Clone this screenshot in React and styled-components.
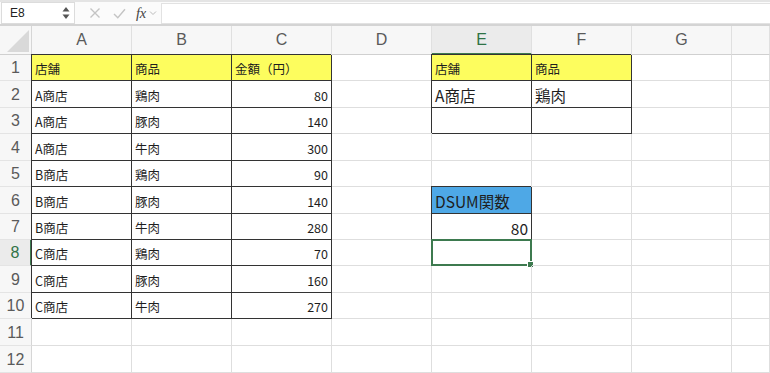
import React from "react";
import styled, { createGlobalStyle, css } from "styled-components";

const Global = createGlobalStyle`
  html, body { margin: 0; padding: 0; background: #fff; }
  body { font-family: "Noto Sans CJK JP", "Liberation Sans", sans-serif; overflow: hidden; }
`;

const Page = styled.div`
  width: 770px;
  height: 373px;
  display: flex;
  flex-direction: column;
  overflow: hidden;
`;

const FormulaBar = styled.div`
  height: 25px;
  box-sizing: border-box;
  border-top: 2px solid #e4e4e4;
  border-bottom: 1px solid #d4d4d4;
  display: flex;
  align-items: center;
  background: #fbfbfb;
  padding: 0 0 0 1px;
`;

const Gap = styled.div`
  height: 3px;
  box-sizing: border-box;
  border-bottom: 1px solid #d4d4d4;
  background: #f3f3f3;
`;

const NameBox = styled.div`
  width: 74px;
  height: 22px;
  box-sizing: border-box;
  border: 1px solid #dcdcdc;
  background: #fff;
  display: flex;
  align-items: center;
  justify-content: space-between;
  padding: 0 4px 0 8px;
  font-family: "Liberation Sans", sans-serif;
  font-size: 12px;
  color: #222;
`;

const Stepper = styled.svg`
  display: block;
`;

const IconBtn = styled.div`
  width: 24px;
  display: flex;
  justify-content: center;
  align-items: center;
  margin-left: ${(p) => p.$ml || 0}px;
`;

const Fx = styled.span`
  font-family: "Liberation Serif", serif;
  font-style: italic;
  font-size: 14.5px;
  color: #444;
  margin-left: 5px;
  letter-spacing: -0.3px;
`;

const Chevron = styled.svg`
  margin-left: 3px;
`;

const FormulaInput = styled.div`
  flex: 1;
  height: 19px;
  margin-left: 4px;
  border: 1px solid #e2e2e2;
  border-right: none;
  background: #fff;
`;

const Grid = styled.div`
  display: grid;
  grid-template-columns: 32px repeat(7, 100px) 1fr;
  grid-template-rows: 29px 26px 27px 26px 27px 26px 27px 26px 26px 27px 26px 27px 27px;
`;

const Corner = styled.div`
  box-sizing: border-box;
  background: #f7f7f7;
  border-right: 1px solid #d6d6d6;
  border-bottom: 1px solid #d0d0d0;
  display: flex;
  align-items: flex-end;
  justify-content: flex-end;
  padding: 0 2px 2px 0;
`;

const ColHead = styled.div`
  box-sizing: border-box;
  background: ${(p) => (p.$active ? "#ebebeb" : "#f7f7f7")};
  border-right: 1px solid #e0e0e0;
  border-bottom: ${(p) => (p.$active ? "2px solid #3d7a4f" : "1px solid #d0d0d0")};
  display: flex;
  align-items: center;
  justify-content: center;
  font-family: "Liberation Sans", sans-serif;
  font-size: 16px;
  color: ${(p) => (p.$active ? "#2f7346" : "#5a5a5a")};
  padding-top: ${(p) => (p.$active ? "1px" : "0")};
`;

const RowHead = styled.div`
  box-sizing: border-box;
  background: ${(p) => (p.$active ? "#ebebeb" : "#f7f7f7")};
  border-right: ${(p) => (p.$active ? "2px solid #3d7a4f" : "1px solid #d6d6d6")};
  border-bottom: 1px solid #e4e4e4;
  display: flex;
  align-items: center;
  justify-content: center;
  font-family: "Liberation Sans", sans-serif;
  font-size: 16px;
  color: ${(p) => (p.$active ? "#2f7346" : "#5a5a5a")};
  padding-top: 1px;
`;

const Cell = styled.div`
  position: relative;
  box-sizing: border-box;
  border-right: 1px solid #dedede;
  border-bottom: 1px solid #dedede;
  display: flex;
  align-items: center;
  justify-content: ${(p) => (p.$right ? "flex-end" : "flex-start")};
  padding: 2px 3px 0 3px;
  font-size: ${(p) => (p.$big ? "15.5px" : "12.5px")};
  color: #1e1e1e;
  white-space: nowrap;
  background: ${(p) => p.$fill || "transparent"};
  ${(p) =>
    p.$boxed &&
    css`
      border-right-color: #333;
      border-bottom-color: #333;
      box-shadow: -1px -1px 0 0 #333;
    `}
`;

const Selection = styled.div`
  position: absolute;
  left: -1px;
  top: -1px;
  right: -1px;
  bottom: -1px;
  border: 2px solid #3d7a4f;
  pointer-events: none;
`;

const Handle = styled.div`
  position: absolute;
  right: -4px;
  bottom: -4px;
  width: 5px;
  height: 5px;
  background: #3d7a4f;
  border: 1px solid #fff;
`;

const YELLOW = "#fdfd5e";
const BLUE = "#4ea8e6";

const cols = ["A", "B", "C", "D", "E", "F", "G", ""];

const cellData = {
  A1: { t: "店舗", fill: YELLOW, boxed: true },
  B1: { t: "商品", fill: YELLOW, boxed: true },
  C1: { t: "金額（円）", fill: YELLOW, boxed: true },
  E1: { t: "店舗", fill: YELLOW, boxed: true },
  F1: { t: "商品", fill: YELLOW, boxed: true },
  E2: { t: "A商店", boxed: true, big: true },
  F2: { t: "鶏肉", boxed: true, big: true },
  E3: { boxed: true },
  F3: { boxed: true },
  E6: { t: "DSUM関数", fill: BLUE, boxed: true, big: true },
  E7: { t: "80", boxed: true, big: true, right: true },
};

const rows = [
  ["A商店", "鶏肉", "80"],
  ["A商店", "豚肉", "140"],
  ["A商店", "牛肉", "300"],
  ["B商店", "鶏肉", "90"],
  ["B商店", "豚肉", "140"],
  ["B商店", "牛肉", "280"],
  ["C商店", "鶏肉", "70"],
  ["C商店", "豚肉", "160"],
  ["C商店", "牛肉", "270"],
];
rows.forEach((r, i) => {
  const n = i + 2;
  cellData["A" + n] = { t: r[0], boxed: true };
  cellData["B" + n] = { t: r[1], boxed: true };
  cellData["C" + n] = { t: r[2], boxed: true, right: true };
});

export default function App() {
  const items = [];
  items.push(
    <Corner key="corner">
      <svg width="22" height="22" viewBox="0 0 22 22">
        <polygon points="22,0 22,22 0,22" fill="#d9d9d9" />
      </svg>
    </Corner>
  );
  cols.forEach((c, i) =>
    items.push(
      <ColHead key={"h" + i} $active={c === "E"}>
        {c}
      </ColHead>
    )
  );
  for (let r = 1; r <= 12; r++) {
    items.push(
      <RowHead key={"r" + r} $active={r === 8}>
        {r}
      </RowHead>
    );
    cols.forEach((c, i) => {
      const id = c + r;
      const d = (c && cellData[id]) || {};
      items.push(
        <Cell
          key={id + i}
          $fill={d.fill}
          $boxed={d.boxed}
          $big={d.big}
          $right={d.right}
        >
          {d.t}
          {id === "E8" && (
            <Selection>
              <Handle />
            </Selection>
          )}
        </Cell>
      );
    });
  }

  return (
    <Page>
      <Global />
      <FormulaBar>
        <NameBox>
          <span>E8</span>
          <Stepper width="8" height="14" viewBox="0 0 8 14">
            <polygon points="4,1 7.5,5.5 0.5,5.5" fill="#555" />
            <polygon points="0.5,8.5 7.5,8.5 4,13" fill="#555" />
          </Stepper>
        </NameBox>
        <IconBtn $ml={8}>
          <svg width="12" height="12" viewBox="0 0 12 12">
            <path d="M1.5 1.5 L10.5 10.5 M10.5 1.5 L1.5 10.5" stroke="#c4c4c4" strokeWidth="1.4" fill="none" />
          </svg>
        </IconBtn>
        <IconBtn>
          <svg width="13" height="11" viewBox="0 0 13 11">
            <path d="M1 6 L4.8 9.8 L12 1.2" stroke="#c4c4c4" strokeWidth="1.4" fill="none" />
          </svg>
        </IconBtn>
        <Fx>fx</Fx>
        <Chevron width="8" height="6" viewBox="0 0 8 6">
          <path d="M1 1.5 L4 4.5 L7 1.5" stroke="#bbb" strokeWidth="1" fill="none" />
        </Chevron>
        <FormulaInput />
      </FormulaBar>
      <Gap />
      <Grid>{items}</Grid>
    </Page>
  );
}
